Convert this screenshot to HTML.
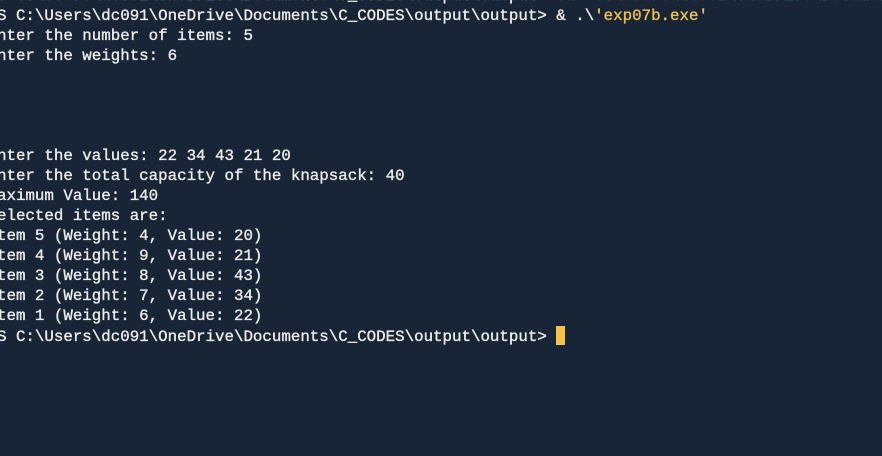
<!DOCTYPE html>
<html><head><style>
html,body{margin:0;padding:0;width:882px;height:456px;overflow:hidden;background:#182536;}
pre{position:absolute;left:-12.5px;top:-14px;margin:0;font-family:"Liberation Mono",monospace;font-size:15.8px;line-height:20px;color:#ececec;-webkit-text-stroke:0.35px #ececec;}
.y{color:#f2c14e;-webkit-text-stroke:0.35px #f2c14e}.c{color:#5fd7e0;-webkit-text-stroke:0.35px #5fd7e0}
.cur{display:inline-block;width:9px;height:19px;background:#f5c242;vertical-align:-4px;}
</style></head><body>
<pre>PS C:\Users\dc091\OneDrive\Documents\C_CODES\output\output&gt; <span class="y">cd</span> <span class="c">'c:\Users\dc091\OneDrive\Documents'</span>
PS C:\Users\dc091\OneDrive\Documents\C_CODES\output\output&gt; &amp; .\<span class="y">'exp07b.exe'</span>
Enter the number of items: 5
Enter the weights: 6




Enter the values: 22 34 43 21 20
Enter the total capacity of the knapsack: 40
Maximum Value: 140
Selected items are:
Item 5 (Weight: 4, Value: 20)
Item 4 (Weight: 9, Value: 21)
Item 3 (Weight: 8, Value: 43)
Item 2 (Weight: 7, Value: 34)
Item 1 (Weight: 6, Value: 22)
PS C:\Users\dc091\OneDrive\Documents\C_CODES\output\output&gt; <span class="cur"></span></pre>
</body></html>
